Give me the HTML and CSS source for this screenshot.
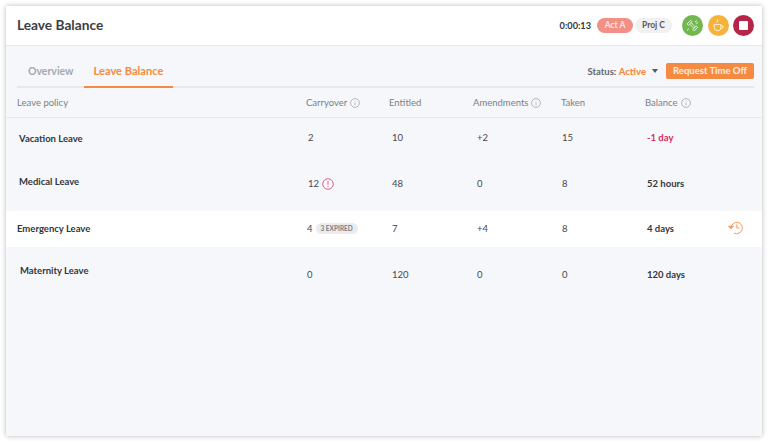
FILE: index.html
```html
<!DOCTYPE html>
<html lang="en">
<head>
  <meta charset="UTF-8">
  <meta name="viewport" content="width=device-width, initial-scale=1.0">
  <title>Leave Balance</title>
  <link rel="stylesheet" href="styles.css">
</head>
<body>
  <div class="window">

    <!-- Top bar -->
    <header class="topbar">
      <h1>Leave Balance</h1>
      <div class="timer">
        <span class="time">0:00:13</span>
        <span class="pill pill-act">Act A</span>
        <span class="pill pill-proj">Proj C</span>
      </div>
      <div class="actions">
        <span class="round round-green">
          <svg width="15" height="15" viewBox="0 0 16 16" fill="none" stroke="#e4f2dc" stroke-width="1" stroke-linecap="round" stroke-linejoin="round">
            <path d="M2.500 6 6 2.500 7.500 4 4 7.500Z"/>
            <path d="M8.500 12 12 8.500 13.500 10 10 13.500Z"/>
            <path d="M5 6.500 9.500 11"/>
            <path d="M6.500 5 11 9.500"/>
            <path d="M11 4 12.500 2.800M12 5.500 13.600 5.200M3.500 11.500 2.800 13"/>
          </svg>
        </span>
        <span class="round round-yellow">
          <svg width="15" height="15" viewBox="0 0 16 16" fill="none" stroke="#fdf0d6" stroke-width="1" stroke-linecap="round" stroke-linejoin="round">
            <path d="M3.500 7h7v3.500a3 3 0 0 1-3 3h-1a3 3 0 0 1-3-3Z"/>
            <path d="M10.500 8h1a1.300 1.300 0 0 1 0 3h-1"/>
            <path d="M6 5c0-1 1.200-1 1.200-2s-.6-1-.6-1.400"/>
          </svg>
        </span>
        <span class="round round-red"><span class="stop"></span></span>
      </div>
    </header>

    <main class="content">

      <!-- Tabs -->
      <div class="tabs">
        <a class="tab">Overview</a>
        <a class="tab tab-active">Leave Balance</a>
        <div class="tabs-right">
          <span class="status">Status: <b>Active</b></span>
          <span class="caret"></span>
          <button class="request">Request Time Off</button>
        </div>
      </div>

      <!-- Table -->
      <div class="row row-head">
        <div>Leave policy</div>
        <div class="with-icon">Carryover
          <svg width="10" height="10" viewBox="0 0 10 10" fill="none" stroke="#a3a7ae" stroke-width=".8"><circle cx="5" cy="5" r="4.400"/><path d="M5 4.400V7.400M5 2.600V3.300"/></svg>
        </div>
        <div>Entitled</div>
        <div class="with-icon">Amendments
          <svg width="10" height="10" viewBox="0 0 10 10" fill="none" stroke="#a3a7ae" stroke-width=".8"><circle cx="5" cy="5" r="4.400"/><path d="M5 4.400V7.400M5 2.600V3.300"/></svg>
        </div>
        <div>Taken</div>
        <div class="with-icon">Balance
          <svg width="10" height="10" viewBox="0 0 10 10" fill="none" stroke="#a3a7ae" stroke-width=".8"><circle cx="5" cy="5" r="4.400"/><path d="M5 4.400V7.400M5 2.600V3.300"/></svg>
        </div>
      </div>

      <div class="row row-vacation">
        <div class="name">Vacation Leave</div>
        <div class="val">2</div>
        <div class="val val-b">10</div>
        <div class="val val-c">+2</div>
        <div class="val val-d">15</div>
        <div class="val bal bal-neg">-1 day</div>
      </div>

      <div class="row row-medical">
        <div class="name">Medical Leave</div>
        <div class="val with-icon">12
          <svg class="warn" width="12" height="12" viewBox="0 0 13 13" fill="none" stroke="#e0557d" stroke-width="1"><circle cx="6.500" cy="6.500" r="5.700"/><path d="M6.500 3.300V7.300M6.500 8.900V9.700"/></svg>
        </div>
        <div class="val val-b">48</div>
        <div class="val val-c">0</div>
        <div class="val val-d">8</div>
        <div class="val bal">52 hours</div>
      </div>

      <div class="row row-emergency">
        <div class="name">Emergency Leave</div>
        <div class="val with-icon first">4 <span class="expired">3 EXPIRED</span></div>
        <div class="val val-b">7</div>
        <div class="val val-c">+4</div>
        <div class="val val-d">8</div>
        <div class="val bal">4 days</div>
        <div class="history">
          <svg width="16" height="16" viewBox="0 0 16 16" fill="none" stroke="#f79a5c" stroke-width="1" stroke-linecap="round" stroke-linejoin="round">
            <path d="M3 7.500A5.700 5.700 0 1 1 6.500 13.300"/>
            <path d="M8.800 4.800V8H11"/>
            <path d="M.8 6.500 3 8.800 5.200 6.500Z" fill="#f79a5c"/>
          </svg>
        </div>
      </div>

      <div class="row row-maternity">
        <div class="name">Maternity Leave</div>
        <div class="val first">0</div>
        <div class="val val-b">120</div>
        <div class="val val-c">0</div>
        <div class="val val-d">0</div>
        <div class="val bal">120 days</div>
      </div>

    </main>
  </div>
</body>
</html>
```

FILE: styles.css
```css
* {
  box-sizing: border-box;
}
body {
  margin: 0;
  padding: 6px;
  height: 443px;
  overflow: hidden;
  background-color: #fff;
  font-family: Lato, "Open Sans", sans-serif;
  color: #3b3e45;
}
.window {
  height: 430px;
  width: 756px;
  display: flex;
  flex-direction: column;
  background-color: #f5f7fb;
  box-shadow: 0 0 5px rgba(0, 0, 0, 0.28);
}

/* top bar */
.topbar {
  height: 40px;
  flex-shrink: 0;
  display: flex;
  align-items: center;
  padding: 0 8px 0 11px;
  background-color: #fff;
  border-bottom: 1px solid #e8e9ec;
}
.topbar h1 {
  margin: 0 0 2px;
  font-size: 13.7px;
  font-weight: 700;
  color: #3b3e45;
}
.timer {
  margin-left: auto;
  display: flex;
  align-items: center;
  gap: 2px;
}
.time {
  font-size: 9.2px;
  font-weight: 700;
  color: #33363c;
  margin-right: 4px;
}
.pill {
  height: 15px;
  line-height: 15px;
  border-radius: 8px;
  text-align: center;
  font-size: 8.5px;
  font-weight: 700;
}
.pill-act {
  width: 36px;
  background-color: #f28f86;
  color: #fbe6e3;
}
.pill-proj {
  width: 37px;
  background-color: #f1f1f2;
  color: #55585e;
}
.actions {
  display: flex;
  gap: 4.5px;
  margin-left: 10px;
}
.round {
  width: 21px;
  height: 21px;
  border-radius: 50%;
  display: flex;
  align-items: center;
  justify-content: center;
}
.round-green {
  background-color: #72b84f;
}
.round-yellow {
  background-color: #f6b33c;
}
.round-red {
  background-color: #b42548;
}
.stop {
  width: 9px;
  height: 9px;
  border-radius: 1px;
  background-color: #fff;
}

/* tabs */
.content {
  flex: 1;
}
.tabs {
  height: 42px;
  margin: 0 8px 0 11px;
  display: flex;
  align-items: flex-end;
  border-bottom: 2px solid #e6e8ec;
}
.tab {
  height: 29px;
  margin-bottom: -2px;
  padding: 0 10px 0 11px;
  line-height: 24px;
  font-size: 10.5px;
  font-weight: 700;
  color: #a5a8b1;
}
.tab-active {
  padding: 0 10px;
  font-size: 11.1px;
  color: #f58a42;
  border-bottom: 2px solid #f58a42;
}
.tabs-right {
  margin-left: auto;
  align-self: stretch;
  display: flex;
  align-items: center;
  padding-top: 9px;
}
.status {
  padding-top: 2px;
  font-size: 9.5px;
  font-weight: 700;
  color: #63666d;
}
.status b {
  color: #f58a42;
}
.caret {
  margin: 0 8px 0 6px;
  border-left: 3.500px solid transparent;
  border-right: 3.500px solid transparent;
  border-top: 4px solid #55585e;
}
.request {
  width: 88px;
  height: 16px;
  padding: 0;
  border: none;
  border-radius: 2px;
  background-color: #f58a42;
  color: #fdeee3;
  font-family: inherit;
  font-size: 9.5px;
  font-weight: 700;
}

/* table */
.row {
  display: grid;
  grid-template-columns: 289px 83px 84px 88px 84px 1fr;
  align-items: start;
  padding-left: 11px;
  font-size: 9.5px;
}
.row-head {
  height: 30px;
  align-items: center;
  border-bottom: 1px solid #e6e8ec;
  color: #7c7f86;
}
.with-icon {
  display: flex;
  align-items: center;
  gap: 3px;
}
.name {
  font-weight: 700;
  color: #33363c;
}
.val {
  color: #45484e;
  padding-left: 2px;
}
.val-b {
  padding-left: 3px;
}
.val-c {
  padding-left: 4px;
}
.val-d {
  padding-left: 1px;
}
.bal {
  font-weight: 700;
  color: #33363c;
}
.bal-neg {
  color: #d42f5e;
}
.row-vacation {
  height: 42px;
  padding-top: 14px;
}
.row-vacation .name {
  padding-left: 2px;
  padding-top: 1px;
}
.row-medical {
  height: 51px;
  padding-top: 16px;
}
.row-medical .name {
  padding-left: 2px;
}
.row-medical .val {
  padding-top: 2px;
}
.warn {
  margin: -1px 0;
}
.row-emergency {
  height: 36px;
  align-items: center;
  padding-bottom: 1px;
  background-color: #fff;
  position: relative;
}
.val.first {
  padding-left: 1px;
}
.expired {
  height: 11px;
  line-height: 11px;
  padding: 0 5px;
  border-radius: 6px;
  background-color: #ececee;
  color: #7b7e85;
  font-size: 6.500px;
  font-weight: 700;
}
.history {
  position: absolute;
  right: 18px;
  top: 9px;
  line-height: 0;
}
.row-maternity {
  padding-top: 18px;
}
.row-maternity .name {
  padding-left: 3px;
}
.row-maternity .val {
  padding-top: 4px;
}
```
